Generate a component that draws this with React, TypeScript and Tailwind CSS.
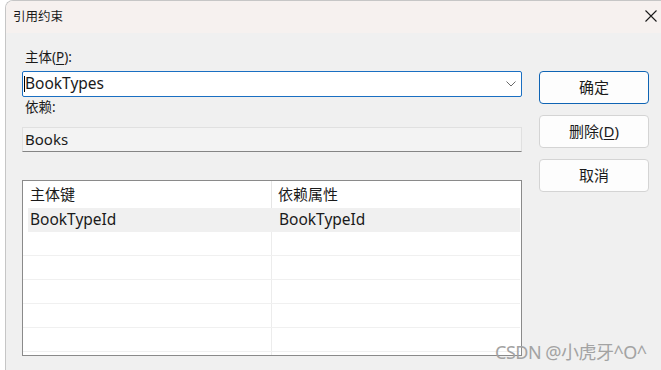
import React from 'react';

const font = "font-['Noto_Sans','Noto_Sans_CJK_SC',sans-serif]";

const rows = [
  { key: 'BookTypeId', dep: 'BookTypeId' },
  { key: '', dep: '' },
  { key: '', dep: '' },
  { key: '', dep: '' },
  { key: '', dep: '' },
  { key: '', dep: '' },
  { key: '', dep: '' },
];

const DialogButton: React.FC<{ primary?: boolean; children: React.ReactNode }> = ({ primary, children }) => (
  <button
    className={
      primary
        ? 'h-[33px] w-full rounded-[4px] border border-[#0f64b4] bg-[#fdfdfd] text-[15px] text-[#1b1b1b]'
        : 'h-[33px] w-full rounded-[4px] border border-[#d4d4d4] bg-[#fdfdfd] text-[15px] text-[#1b1b1b]'
    }
  >
    {children}
  </button>
);

export default function App() {
  return (
    <div className={`relative w-[661px] h-[370px] overflow-hidden bg-white pl-[5px] ${font}`}>
      <div className="h-full flex flex-col overflow-hidden rounded-tl-[8px] border-l border-t border-[#c6c6c6]">
        {/* title bar */}
        <div className="h-[32px] shrink-0 flex items-center justify-between bg-[#f6f1ef] pl-[7px] pr-[4px]">
          <span className="text-[12.5px] text-[#1a1a1a]">引用约束</span>
          <svg width="12" height="12" viewBox="0 0 12 12" className="mt-[-2px]">
            <path d="M0.5 0.5 L11.5 11.5 M11.5 0.5 L0.5 11.5" stroke="#1a1a1a" strokeWidth="1.1" fill="none" />
          </svg>
        </div>

        {/* body */}
        <div className="flex-1 flex gap-[17px] bg-[#f0f0f0] pl-[16px]">
          <div className="w-[500px] flex flex-col pt-[14px]">
            <div className="h-[20px] flex items-center pl-[3px] text-[13.5px] text-[#1a1a1a] mb-[4px]">
              主体(<span className="underline underline-offset-2">P</span>):
            </div>
            <div className="h-[26px] flex items-center rounded-[2px] border border-[#1a6fc2] bg-white pl-[1px] pr-[5px]">
              <span className="w-[1px] h-[16px] bg-black" />
              <span className="flex-1 text-[15.5px] text-[#1a1a1a]">BookTypes</span>
              <svg width="10" height="6" viewBox="0 0 10 6">
                <path d="M0.5 0.5 L5 5 L9.5 0.5" stroke="#6a6a6a" strokeWidth="1" fill="none" />
              </svg>
            </div>
            <div className="h-[20px] flex items-center pl-[3px] text-[13.5px] text-[#1a1a1a] mb-[10px]">依赖:</div>
            <div className="h-[25px] flex items-center border border-[#e0e0e0] border-b-[#858585] bg-[#f3f3f3] pl-[2px] text-[15px] text-[#1a1a1a]">
              Books
            </div>

            {/* list */}
            <div className="mt-[28px] h-[176px] overflow-hidden border border-[#8a8a8a] bg-white">
              <div className="h-[27px] grid grid-cols-[249px_1fr] text-[15px] text-[#1a1a1a]">
                <div className="flex items-center pl-[7px] border-r border-[#e5e5e5]">主体键</div>
                <div className="flex items-center pl-[6px] mr-[1px]">依赖属性</div>
              </div>
              {rows.map((r, i) =>
                i === 0 ? (
                  <div key={i} className="h-[24px] pl-[5px] pr-[1px]">
                    <div className="h-full grid grid-cols-[244px_1fr] bg-[#f0f0f0] text-[15.5px] text-[#1a1a1a]">
                      <div className="flex items-center pl-[2px]">{r.key}</div>
                      <div className="flex items-center pl-[7px]">{r.dep}</div>
                    </div>
                  </div>
                ) : (
                  <div key={i} className="h-[24px] grid grid-cols-[249px_1fr] border-b border-[#f0f0f0] mr-[1px]">
                    <div className="border-r border-[#ececec]" />
                    <div />
                  </div>
                )
              )}
            </div>
          </div>

          <div className="w-[110px] flex flex-col gap-[11px] pt-[38px]">
            <DialogButton primary>确定</DialogButton>
            <DialogButton>
              删除(<span className="underline underline-offset-2">D</span>)
            </DialogButton>
            <DialogButton>取消</DialogButton>
          </div>
        </div>
      </div>

      {/* watermark */}
      <div className="absolute left-[495px] top-[339px] text-[18px] text-[#a3a3a3] tracking-[-0.5px]">
        CSDN @小虎牙^O^
      </div>
    </div>
  );
}
